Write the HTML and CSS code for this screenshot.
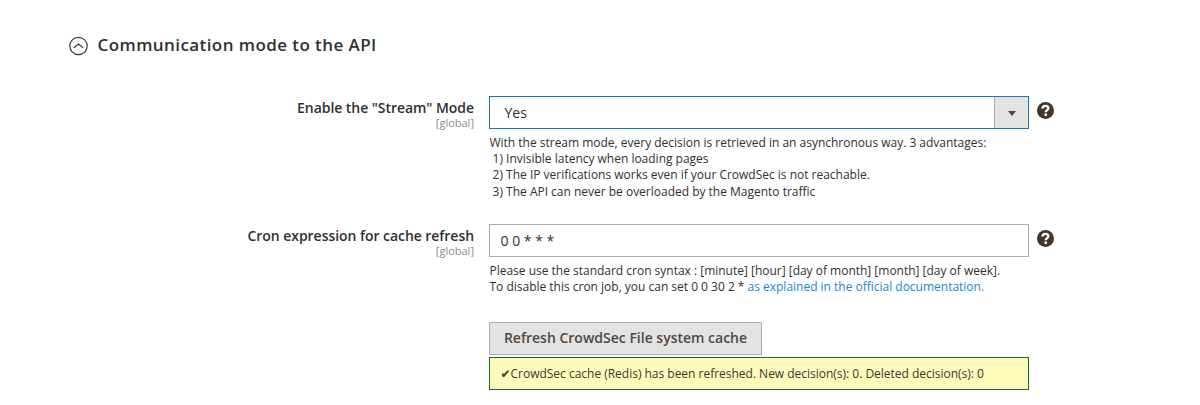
FILE: index.html
```html
<!DOCTYPE html>
<html lang="en">
<head>
<meta charset="utf-8">
<title>Communication mode to the API</title>
<link rel="stylesheet" href="styles.css">
</head>
<body>
<main class="section">
  <h2 class="section-title">
    <svg class="collapse-icon" viewBox="0 0 20 20"><circle cx="9.500" cy="10" r="8.700"/><path d="M4.900 11.700 9.500 8 14.100 11.700"/></svg>
    <span>Communication mode to the API</span>
  </h2>
  <div class="row row-mode">
    <div class="label"><span class="name">Enable the "Stream" Mode</span><span class="scope">[global]</span></div>
    <div class="value">
      <div class="select"><span class="select-text">Yes</span><span class="select-arrow"></span></div>
      <p class="note">With the stream mode, every decision is retrieved in an asynchronous way. 3 advantages:<br>&nbsp;1) Invisible latency when loading pages<br>&nbsp;2) The IP verifications works even if your CrowdSec is not reachable.<br>&nbsp;3) The API can never be overloaded by the Magento traffic</p>
    </div>
    <svg class="help" viewBox="0 0 16 16"><circle cx="8" cy="8" r="8"/><path d="M5.200 6.200C5.200 4.400 6.400 3.600 8 3.600s2.700.9 2.700 2.300C10.700 7.700 8.200 7.700 8.200 9.700"/><rect x="7" y="10.800" width="2.400" height="2.300"/></svg>
  </div>
  <div class="row row-cron">
    <div class="label"><span class="name">Cron expression for cache refresh</span><span class="scope">[global]</span></div>
    <div class="value">
      <div class="input">0 0 * * *</div>
      <p class="note">Please use the standard cron syntax : [minute] [hour] [day of month] [month] [day of week].<br>To disable this cron job, you can set 0 0 30 2 * <a class="link">as explained in the official documentation.</a></p>
    </div>
    <svg class="help" viewBox="0 0 16 16"><circle cx="8" cy="8" r="8"/><path d="M5.200 6.200C5.200 4.400 6.400 3.600 8 3.600s2.700.9 2.700 2.300C10.700 7.700 8.200 7.700 8.200 9.700"/><rect x="7" y="10.800" width="2.400" height="2.300"/></svg>
  </div>
  <div class="actions">
    <button class="button">Refresh CrowdSec File system cache</button>
    <div class="message"><span class="check">✔</span>CrowdSec cache (Redis) has been refreshed. New decision(s): 0. Deleted decision(s): 0</div>
  </div>
</main>
</body>
</html>
```
FILE: styles.css
```css
* { box-sizing: border-box; }
body { margin: 0; background: #fff; color: #303030; font-family: "Open Sans", "Noto Sans", sans-serif; }
.section { display: flex; flex-direction: column; height: 405px; padding: 32px 0 0 69px; }
.section-title { display: flex; align-items: flex-start; gap: 8.500px; height: 26px; margin: 0 0 38px; font-size: 17px; line-height: 26px; font-weight: 600; letter-spacing: 0.425px; }
.collapse-icon { width: 20px; height: 20px; margin-top: 4px; fill: none; stroke: #41362f; stroke-width: 1.2; }
.row { display: flex; align-items: flex-start; height: 128px; }
.row-cron { height: 98px; }
.label { display: flex; flex-direction: column; align-items: flex-end; width: 405px; padding-top: 2px; margin-right: 15px; }
.name { font-size: 14px; line-height: 19px; font-weight: 600; letter-spacing: -0.050px; white-space: nowrap; }
.scope { font-size: 11px; line-height: 12px; color: #8c8c8c; }
.value { width: 540px; }
.select, .input { display: flex; align-items: center; height: 33px; border: 1px solid #adadad; font-size: 14px; }
.select { border-color: #1979b8; }
.select-text { flex: 1; padding-left: 14.500px; }
.select-arrow { display: flex; align-items: center; justify-content: center; width: 34px; height: 31px; background: #e3e3e3; border-left: 1px solid #adadad; }
.select-arrow::after { content: ""; margin-top: 2px; border: 4px solid transparent; border-top: 5px solid #514943; border-bottom: 0; }
.input { padding-left: 10.500px; }
.note { margin: 6px 0 0; padding-left: 0.500px; font-size: 12px; line-height: 16.200px; letter-spacing: -0.010px; white-space: nowrap; }
.link { color: #1989ce; }
.help { width: 17px; height: 17px; margin: 6px 0 0 7.500px; fill: #41362f; }
.help path { fill: none; stroke: #fff; stroke-width: 2.2; }
.help rect { fill: #fff; }
.actions { display: flex; flex-direction: column; align-items: flex-start; gap: 2px; padding-left: 420px; }
.button { width: 273px; height: 33px; padding: 0 0 2px; border: 1px solid #adadad; background: #e3e3e3; color: #514943; font: 600 14px "Open Sans", sans-serif; white-space: nowrap; }
.message { display: flex; align-items: center; width: 540px; height: 33px; padding-left: 10.500px; border: 1px solid #147014; background: #fffbbb; color: #41362f; font-size: 12px; letter-spacing: -0.015px; white-space: nowrap; }
.check { font-family: "DejaVu Sans", sans-serif; }
```
